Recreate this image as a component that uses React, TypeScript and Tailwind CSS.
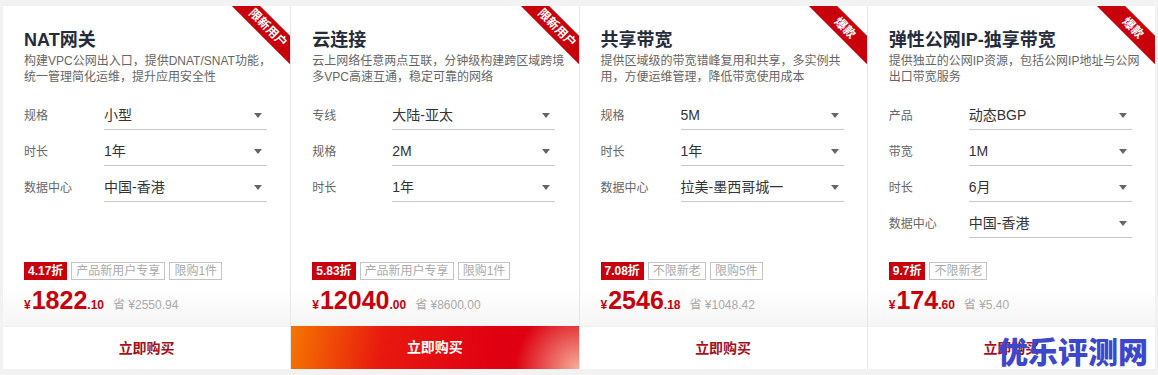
import { useState } from 'react';

type Field = { label: string; value: string };

type Product = {
    title: string;
    desc: string[];
    ribbon: string;
    fields: Field[];
    discount: string;
    tags: string[];
    price: string;
    cents: string;
    save: string;
    hot?: boolean;
};

const products: Product[] = [
    {
        title: 'NAT网关',
        desc: ['构建VPC公网出入口，提供DNAT/SNAT功能，', '统一管理简化运维，提升应用安全性'],
        ribbon: '限新用户',
        fields: [
            { label: '规格', value: '小型' },
            { label: '时长', value: '1年' },
            { label: '数据中心', value: '中国-香港' },
        ],
        discount: '4.17折',
        tags: ['产品新用户专享', '限购1件'],
        price: '1822',
        cents: '.10',
        save: '¥2550.94',
    },
    {
        title: '云连接',
        desc: ['云上网络任意两点互联，分钟级构建跨区域跨境', '多VPC高速互通，稳定可靠的网络'],
        ribbon: '限新用户',
        fields: [
            { label: '专线', value: '大陆-亚太' },
            { label: '规格', value: '2M' },
            { label: '时长', value: '1年' },
        ],
        discount: '5.83折',
        tags: ['产品新用户专享', '限购1件'],
        price: '12040',
        cents: '.00',
        save: '¥8600.00',
        hot: true,
    },
    {
        title: '共享带宽',
        desc: ['提供区域级的带宽错峰复用和共享，多实例共', '用，方便运维管理，降低带宽使用成本'],
        ribbon: '爆款',
        fields: [
            { label: '规格', value: '5M' },
            { label: '时长', value: '1年' },
            { label: '数据中心', value: '拉美-墨西哥城一' },
        ],
        discount: '7.08折',
        tags: ['不限新老', '限购5件'],
        price: '2546',
        cents: '.18',
        save: '¥1048.42',
    },
    {
        title: '弹性公网IP-独享带宽',
        desc: ['提供独立的公网IP资源，包括公网IP地址与公网', '出口带宽服务'],
        ribbon: '爆款',
        fields: [
            { label: '产品', value: '动态BGP' },
            { label: '带宽', value: '1M' },
            { label: '时长', value: '6月' },
            { label: '数据中心', value: '中国-香港' },
        ],
        discount: '9.7折',
        tags: ['不限新老'],
        price: '174',
        cents: '.60',
        save: '¥5.40',
    },
];

function SelectRow({ field }: { field: Field }) {
    return (
        <div className="flex h-[28px] items-center">
            <span className="w-[80px] shrink-0 text-[12px] text-[#666]">{field.label}</span>
            <div className="flex h-full w-[163px] items-center justify-between border-b border-[#c8c8c8] pr-[5px]">
                <span className="text-[14px] text-[#333]">{field.value}</span>
                <span className="h-0 w-0 border-x-[4px] border-t-[5px] border-x-transparent border-t-[#666]" />
            </div>
        </div>
    );
}

function ProductCard({ product }: { product: Product }) {
    const [fields] = useState(product.fields);

    return (
        <div className="relative flex flex-col overflow-hidden bg-white">
            <div className="absolute top-[12px] right-[-28px] flex h-[20px] w-[100px] rotate-45 items-center justify-center bg-[#c7000b] text-[12px] font-bold text-white">
                {product.ribbon}
            </div>

            <div className="flex flex-1 flex-col bg-[linear-gradient(180deg,#ffffff_88%,#f5f5f5_100%)] pt-[22px] pr-[20px] pb-[12px] pl-[21px]">
                <h3 className="text-[18px] leading-[24px] font-bold text-[#252b3a]">{product.title}</h3>
                <div className="mt-[1px] text-[12px] leading-[16px] text-[#666]">
                    {product.desc.map((line) => (
                        <div key={line} className="whitespace-nowrap">
                            {line}
                        </div>
                    ))}
                </div>

                <div className="mt-[17px] flex flex-col gap-[8px]">
                    {fields.map((f) => (
                        <SelectRow key={f.label} field={f} />
                    ))}
                </div>

                <div className="mt-auto flex items-center gap-[4px]">
                    <span className="h-[18px] bg-[#c7000b] px-[4px] text-[12px] leading-[18px] font-bold text-white">{product.discount}</span>
                    {product.tags.map((t) => (
                        <span key={t} className="h-[18px] border border-[#c4c4c4] px-[4px] text-[12px] leading-[16px] text-[#aaa]">
                            {t}
                        </span>
                    ))}
                </div>

                <div className="mt-[6px] flex h-[28px] items-baseline text-[#c7000b]">
                    <span className="text-[12px] font-bold">¥</span>
                    <span className="ml-[1px] text-[25px] leading-[28px] font-bold">{product.price}</span>
                    <span className="text-[12px] font-bold">{product.cents}</span>
                    <span className="ml-[9px] text-[12px] text-[#aaa]">省 {product.save}</span>
                </div>
            </div>

            {product.hot ? (
                <button
                    type="button"
                    className="h-[43px] bg-[radial-gradient(circle_at_100%_100%,#f6b09c_0%,rgba(230,0,18,0)_22%),linear-gradient(100deg,#f57600_0%,#e8190f_32%,#e00012_70%,#d9000f_100%)] text-[14px] font-bold text-white"
                >
                    立即购买
                </button>
            ) : (
                <button type="button" className="h-[43px] border-t border-[#f0f0f0] bg-white text-[14px] font-bold text-[#a3121c]">
                    立即购买
                </button>
            )}
        </div>
    );
}

export default function App() {
    return (
        <div
            className="relative h-[375px] w-[1158px] bg-[#f2f2f2] px-[3px] pt-[6px] pb-[6px]"
            style={{ fontFamily: '"Liberation Sans", "Noto Sans CJK SC", sans-serif' }}
        >
            <div className="grid h-full grid-cols-4 gap-px bg-[#e6e6e6]">
                {products.map((p) => (
                    <ProductCard key={p.title} product={p} />
                ))}
            </div>
            <div className="pointer-events-none absolute right-[10px] bottom-[4px] text-[30px] leading-[36px] font-black text-[#3c48cc]">
                优乐评测网
            </div>
        </div>
    );
}
